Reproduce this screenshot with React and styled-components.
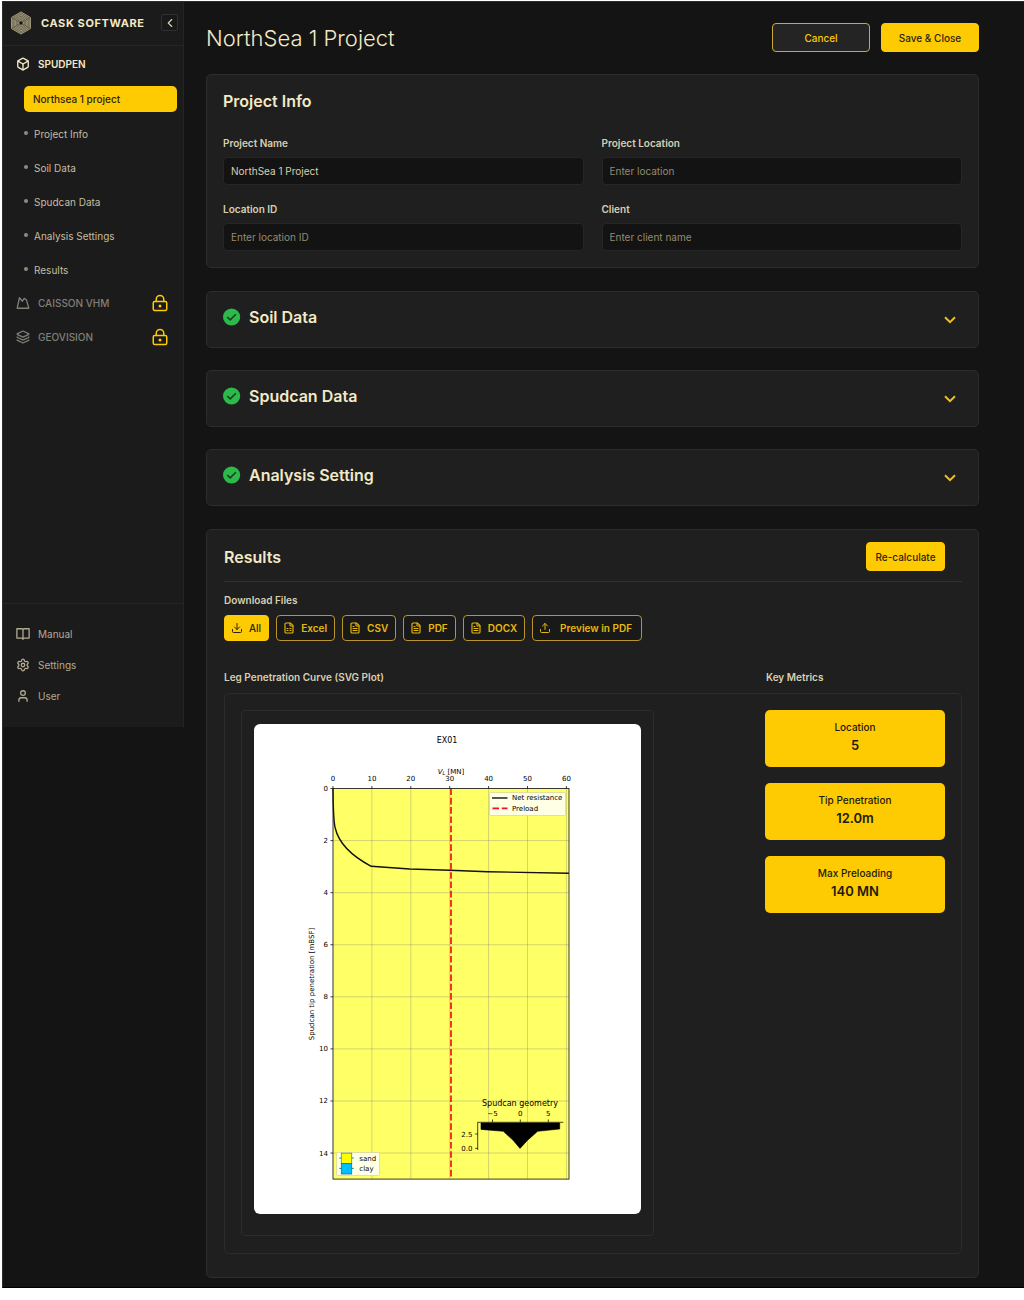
import React from 'react'
import styled, { createGlobalStyle } from 'styled-components'
import {
  Box, ChevronLeft, Download, FileSpreadsheet, FileText,
  Layers, LockKeyhole, Settings, Upload, User
} from 'lucide-react'

const yellow = '#fecb02'
const cream = '#f3e9c6'
const sand = '#d8cfb2'
const muted = '#b3ab90'
const line = '#2c2c2c'

const GlobalStyle = createGlobalStyle`
  * {
    box-sizing: border-box;
  }
  body {
    margin: 0;
    background: #fff;
    font-family: Inter, 'Liberation Sans', sans-serif;
    font-size: 10px;
    line-height: 14px;
    color: ${sand};
  }
  h1, h2, h3, p, ul {
    margin: 0;
    padding: 0;
  }
  button, input {
    font-family: inherit;
    font-size: 10px;
  }
  svg {
    display: block;
    flex-shrink: 0;
  }
`

const Page = styled.div`
  display: flex;
  align-items: flex-start;
  margin: 1px 0 0 2px;
  background: #141414;
  border: 1px solid #2a302c;
  border-right: 0;
  border-bottom-color: #000;
`

/* sidebar */

const Sidebar = styled.aside`
  display: flex;
  flex-direction: column;
  flex: 0 0 181px;
  background: #1b1b1b;
  border-right: 1px solid #252525;
`
const Brand = styled.div`
  display: flex;
  align-items: center;
  gap: 9px;
  height: 44px;
  padding: 0 5px 2px 7px;
  border-bottom: 1px solid #262626;
`
const BrandName = styled.span`
  flex: 1;
  color: ${cream};
  font-size: 11px;
  font-weight: 700;
  letter-spacing: 0.6px;
  white-space: nowrap;
`
const CollapseButton = styled.button`
  display: flex;
  align-items: center;
  justify-content: center;
  width: 17px;
  height: 17px;
  padding: 0;
  color: ${sand};
  background: #191919;
  border: 1px solid #303030;
  border-radius: 2px;
  cursor: pointer;
`
const Nav = styled.nav`
  min-height: 558px;
  padding: 1px 6px 0 13px;
  border-bottom: 1px solid #262626;
`
const NavLink = styled.a`
  display: flex;
  align-items: center;
  gap: 8px;
  height: 34px;
  padding-right: 8px;
  color: ${props => props.$locked ? '#827f78' : cream};
  font-weight: ${props => props.$locked ? 500 : 600};
  text-decoration: none;
  span {
    flex: 1;
  }
`
const ActiveLink = styled.a`
  display: block;
  margin: 5px 0 5px 8px;
  padding: 6px 9px;
  color: #2a2410;
  font-weight: 500;
  background: ${yellow};
  border-radius: 5px;
  text-decoration: none;
`
const SubLink = styled.a`
  display: flex;
  align-items: center;
  gap: 6px;
  height: 34px;
  padding-left: 8px;
  color: #c5bda0;
  text-decoration: none;
  &::before {
    content: '';
    width: 4px;
    height: 4px;
    margin-bottom: 2px;
    border-radius: 50%;
    background: #8f8b7d;
  }
`
const SubList = styled.div`
  margin-bottom: -1px;
`
const FootNav = styled.nav`
  padding: 14px 13px 16px;
`
const FootLink = styled.a`
  display: flex;
  align-items: center;
  gap: 8px;
  height: 31px;
  color: ${muted};
  text-decoration: none;
`

/* main column */

const Main = styled.main`
  flex: 1;
  min-width: 0;
  display: flex;
  flex-direction: column;
  gap: 23px;
  padding: 21px 45px 9px 22px;
`
const TopBar = styled.header`
  display: flex;
  align-items: center;
  gap: 11px;
  height: 29px;
  margin-bottom: -1px;
`
const PageTitle = styled.h1`
  flex: 1;
  color: ${cream};
  font-size: 22px;
  line-height: 28px;
  font-weight: 300;
`
const Button = styled.button`
  min-width: ${props => props.$wide ? '98px' : '79px'};
  height: 29px;
  padding: 0 8px;
  white-space: nowrap;
  color: ${props => props.$outline ? yellow : '#2a2410'};
  font-weight: 500;
  background: ${props => props.$outline ? '#242424' : yellow};
  border: 1px solid ${props => props.$outline ? '#c9a93c' : yellow};
  border-radius: 4px;
  cursor: pointer;
`
const Card = styled.section`
  padding: 16px;
  background: #1f1f1f;
  border: 1px solid ${line};
  border-radius: 5px;
`
const CardTitle = styled.h2`
  color: ${cream};
  font-size: 16px;
  line-height: 20px;
  font-weight: 600;
`
const FieldGrid = styled.div`
  display: grid;
  grid-template-columns: 1fr 1fr;
  gap: 17px 18px;
  margin-top: 25px;
`
const Field = styled.div`
  display: flex;
  flex-direction: column;
  gap: 7px;
`
const Label = styled.label`
  color: ${sand};
  font-weight: 600;
`
const Input = styled.input`
  width: 100%;
  height: 28px;
  padding: 0 7px;
  color: ${sand};
  background: #131313;
  border: 1px solid #262626;
  border-radius: 4px;
  outline: 0;
  &::placeholder {
    color: #938b70;
    opacity: 1;
  }
`
const Accordions = styled.div`
  display: flex;
  flex-direction: column;
  gap: 22px;
`
const AccordionCard = styled(Card)`
  display: flex;
  align-items: center;
  justify-content: space-between;
  height: 57px;
  padding: 0 17px 0 16px;
`
const AccordionTitle = styled.div`
  display: flex;
  align-items: center;
  gap: 8px;
  padding-bottom: 5px;
`
const ExpandButton = styled.button`
  display: flex;
  align-items: center;
  justify-content: center;
  width: 22px;
  height: 22px;
  padding: 0;
  background: none;
  border: 0;
  cursor: pointer;
`

/* results */

const ResultsCard = styled(Card)`
  padding: 12px 16px 23px 17px;
`
const ResultsHead = styled.div`
  display: flex;
  align-items: center;
  justify-content: space-between;
  padding: 0 17px 10px 0;
  margin-bottom: 11px;
  border-bottom: 1px solid #303030;
`
const SmallTitle = styled.h3`
  color: ${sand};
  font-size: 10px;
  line-height: 14px;
  font-weight: 600;
`
const Downloads = styled.div`
  display: flex;
  flex-wrap: wrap;
  gap: 7px;
  margin: 8px 0 29px;
`
const DownloadButton = styled.button`
  display: flex;
  align-items: center;
  gap: ${props => props.$spread ? '9px' : '6px'};
  height: 26px;
  padding: 0 ${props => props.$spread ? '9px' : '7px'} 0 6px;
  color: ${props => props.$filled ? '#2a2410' : '#e6b90c'};
  font-weight: ${props => props.$filled ? 500 : 600};
  background: ${props => props.$filled ? yellow : '#191919'};
  border: 1px solid ${props => props.$filled ? yellow : '#b8942a'};
  border-radius: 4px;
  cursor: pointer;
`
const PanelLabels = styled.div`
  display: grid;
  grid-template-columns: 1fr 196px;
  margin-bottom: 9px;
`
const Panel = styled.div`
  display: grid;
  grid-template-columns: minmax(0, 413px) 180px;
  justify-content: space-between;
  align-items: start;
  padding: 16px 16px 17px;
  border: 1px solid ${line};
  border-radius: 5px;
`
const PlotFrame = styled.div`
  padding: 13px 12px 21px;
  border: 1px solid ${line};
  border-radius: 4px;
`
const PlotSvg = styled.svg`
  width: 100%;
  background: #fff;
  border-radius: 6px;
  font-family: 'DejaVu Sans', sans-serif;
  font-size: 7px;
`
const Metrics = styled.div`
  display: flex;
  flex-direction: column;
  gap: 16px;
`
const Metric = styled.div`
  height: 57px;
  padding-top: 10px;
  color: #1d1a0c;
  text-align: center;
  background: ${yellow};
  border-radius: 5px;
`
const MetricName = styled.p`
  font-weight: 500;
`
const MetricValue = styled.p`
  margin-top: 1px;
  font-size: 13px;
  line-height: 20px;
  font-weight: 600;
`

const hexagon = r => [0, 1, 2, 3, 4, 5].map(i => {
  const a = Math.PI / 3 * i - Math.PI / 2
  return `${12 + r * Math.cos(a)},${12 + r * Math.sin(a)}`
}).join(' ')

const Logo = () => (
  <svg width="22" height="24" viewBox="1 0 22 24" fill="none">
    <polygon points={hexagon(11.5)} fill="#57523f" />
    {[11, 9.4, 7.8, 6.2, 4.6, 3].map(r => (
      <polygon key={r} points={hexagon(r)} stroke="#b0a78a" strokeWidth="0.8" />
    ))}
    <path d="M12 12L2.5 6.5M12 12l9.5-5.5M12 12l-9.5 5.5M12 12l9.5 5.5" stroke="#5a5543" strokeWidth="0.7" />
    <circle cx="12" cy="12" r="1.3" fill="#141414" />
  </svg>
)

const PeakIcon = () => (
  <svg width="14" height="14" viewBox="0 0 24 24" fill="none" stroke="currentColor" strokeWidth="2.2" strokeLinejoin="round">
    <path d="M2 21L6 3l5 6 3-5 4 3 4 14z" />
  </svg>
)

const BookIcon = () => (
  <svg width="14" height="14" viewBox="0 0 24 24" fill="none" stroke="currentColor" strokeWidth="2.2" strokeLinejoin="round">
    <path d="M1.5 3H10a2 2 0 0 1 2 2 2 2 0 0 1 2-2h8.5v16H14a2 2 0 0 0-2 2 2 2 0 0 0-2-2H1.5zM12 5v17" />
  </svg>
)

const CheckIcon = () => (
  <svg width="18" height="18" viewBox="0 0 18 18" fill="none">
    <circle cx="8.6" cy="9" r="8.6" fill="#2cba4b" />
    <path d="M4.2 9l3 2.9 5.7-5.6" stroke="#1b3b22" strokeWidth="1.5" />
  </svg>
)

const ChevronIcon = () => (
  <svg width="12" height="8" viewBox="0 0 12 8" fill="none">
    <path d="M1 1.2l5 4.9 5-4.9" stroke="#edc02b" strokeWidth="2" />
  </svg>
)

const px = v => 79 + v * 3.89
const py = v => 64.5 + v * 26.04

const Plot = () => (
  <PlotSvg viewBox="0 0 387 490" role="img" aria-label="Leg penetration curve">
    <rect x="79" y="64.5" width="236" height="390.6" fill="#ffff66" />
    {[10, 20, 30, 40, 50, 60].map(v => (
      <path key={v} d={`M${px(v)} 64.5V455`} stroke="#777" strokeOpacity="0.45" strokeWidth="0.7" />
    ))}
    {[2, 4, 6, 8, 10, 12, 14].map(v => (
      <path key={v} d={`M79 ${py(v)}H315`} stroke="#777" strokeOpacity="0.45" strokeWidth="0.7" />
    ))}
    <path d="M197 64.5V455" stroke="#f2121c" strokeWidth="1.7" strokeDasharray="6.6 2.7" />
    <path
      d="M79 64.5C79.2 80 79.2 97 81.2 104C84.7 119 96.7 131.5 117.2 142.3L155.7 145L195.7 146.3L233.7 147.7L315 149.3"
      fill="none" stroke="#111" strokeWidth="1.4"
    />
    <rect x="79" y="64.5" width="236" height="390.6" fill="none" stroke="#222" strokeWidth="0.9" />

    <text x="193" y="19" fontSize="8" textAnchor="middle">EX01</text>
    <text x="197" y="49.5" textAnchor="middle">
      <tspan fontStyle="italic">V</tspan><tspan fontStyle="italic" fontSize="5" dy="1">L</tspan><tspan dy="-1"> [MN]</tspan>
    </text>
    {[0, 10, 20, 30, 40, 50, 60].map(v => (
      <g key={v}>
        <path d={`M${px(v)} 64.5v-2.5`} stroke="#111" strokeWidth="0.8" />
        <text x={px(v)} y="57" textAnchor="middle">{v}</text>
      </g>
    ))}
    {[0, 2, 4, 6, 8, 10, 12, 14].map(v => (
      <g key={v}>
        <path d={`M79 ${py(v)}h-2.5`} stroke="#111" strokeWidth="0.8" />
        <text x="74" y={py(v) + 2.5} textAnchor="end">{v}</text>
      </g>
    ))}
    <text transform="translate(60 260) rotate(-90)" textAnchor="middle">Spudcan tip penetration [mBSF]</text>

    <g transform="translate(1 0)">
      <rect x="234.5" y="68.5" width="76" height="23" rx="1" fill="#ffffe6" stroke="#d4d49a" strokeWidth="0.7" />
      <path d="M237 74h15.5" stroke="#111" strokeWidth="1.4" />
      <path d="M237.5 84.4h15" stroke="#f2121c" strokeWidth="1.7" strokeDasharray="6.6 2.7" />
      <text x="257" y="76">Net resistance</text>
      <text x="257" y="86.5">Preload</text>

      <text x="265" y="382" fontSize="8" textAnchor="middle">Spudcan geometry</text>
      <path d="M308.3 398.3H222.7V426M237.5 398v-2.5M265.3 398v-2.5M293.3 398v-2.5M222.7 410h-2.5M222.7 424.3h-2.5" fill="none" stroke="#111" strokeWidth="0.8" />
      <text x="237.5" y="392" textAnchor="middle">−5</text>
      <text x="265.3" y="392" textAnchor="middle">0</text>
      <text x="293.3" y="392" textAnchor="middle">5</text>
      <text x="217.5" y="412.7" textAnchor="end">2.5</text>
      <text x="217.5" y="426.8" textAnchor="end">0.0</text>
      <polygon points="226,399 304.7,399 304.7,405 282.7,407.3 272.3,416.5 265,424.5 258.3,416.5 248.3,407.3 226,405.4" stroke="#000" strokeWidth="0.6" />

      <rect x="81.5" y="428.5" width="43" height="23" rx="1" fill="#ffffe6" stroke="#d4d49a" strokeWidth="0.7" />
      <path d="M84.3 434h14.4M84.3 444.4h14.4" stroke="#1a7f8e" strokeWidth="1" />
      <rect x="86.3" y="429.2" width="10.4" height="10.4" fill="#ff0" stroke="#3d9c75" strokeWidth="0.8" />
      <rect x="86.3" y="439.6" width="10.4" height="10.4" fill="#00bfff" stroke="#1a6f9e" strokeWidth="0.8" />
      <text x="104.3" y="436.5">sand</text>
      <text x="104.3" y="447">clay</text>
    </g>
  </PlotSvg>
)

const fields = [
  { id: 'name', label: 'Project Name', value: 'NorthSea 1 Project' },
  { id: 'location', label: 'Project Location', placeholder: 'Enter location' },
  { id: 'locationId', label: 'Location ID', placeholder: 'Enter location ID' },
  { id: 'client', label: 'Client', placeholder: 'Enter client name' },
]

const formats = [
  { name: 'Excel', Icon: FileSpreadsheet },
  { name: 'CSV', Icon: FileText },
  { name: 'PDF', Icon: FileText },
  { name: 'DOCX', Icon: FileText },
]

const metrics = [
  ['Location', '5'],
  ['Tip Penetration', '12.0m'],
  ['Max Preloading', '140 MN'],
]

const App = () => {
  return (
    <>
      <GlobalStyle />
      <Page>
        <Sidebar>
          <Brand>
            <Logo />
            <BrandName>CASK SOFTWARE</BrandName>
            <CollapseButton aria-label="Collapse sidebar"><ChevronLeft size={14} /></CollapseButton>
          </Brand>
          <Nav>
            <NavLink href="#spudpen"><Box size={14} strokeWidth={2.3} /><span>SPUDPEN</span></NavLink>
            <ActiveLink href="#project">Northsea 1 project</ActiveLink>
            <SubList>
              {['Project Info', 'Soil Data', 'Spudcan Data', 'Analysis Settings', 'Results'].map(item => (
                <SubLink key={item} href="#section">{item}</SubLink>
              ))}
            </SubList>
            <NavLink $locked href="#caisson">
              <PeakIcon /><span>CAISSON VHM</span><LockKeyhole size={18} color={yellow} />
            </NavLink>
            <NavLink $locked href="#geovision">
              <Layers size={14} strokeWidth={2.2} /><span>GEOVISION</span><LockKeyhole size={18} color={yellow} />
            </NavLink>
          </Nav>
          <FootNav>
            <FootLink href="#manual"><BookIcon />Manual</FootLink>
            <FootLink href="#settings"><Settings size={14} strokeWidth={2.2} />Settings</FootLink>
            <FootLink href="#user"><User size={14} strokeWidth={2.2} />User</FootLink>
          </FootNav>
        </Sidebar>

        <Main>
          <TopBar>
            <PageTitle>NorthSea 1 Project</PageTitle>
            <Button $wide $outline>Cancel</Button>
            <Button $wide>Save &amp; Close</Button>
          </TopBar>

          <Card>
            <CardTitle>Project Info</CardTitle>
            <FieldGrid>
              {fields.map(field => (
                <Field key={field.id}>
                  <Label htmlFor={field.id}>{field.label}</Label>
                  <Input id={field.id} defaultValue={field.value} placeholder={field.placeholder} />
                </Field>
              ))}
            </FieldGrid>
          </Card>

          <Accordions>
            {['Soil Data', 'Spudcan Data', 'Analysis Setting'].map(title => (
              <AccordionCard key={title}>
                <AccordionTitle>
                  <CheckIcon />
                  <CardTitle>{title}</CardTitle>
                </AccordionTitle>
                <ExpandButton aria-label={`Expand ${title}`}><ChevronIcon /></ExpandButton>
              </AccordionCard>
            ))}
          </Accordions>

          <ResultsCard>
            <ResultsHead>
              <CardTitle>Results</CardTitle>
              <Button>Re-calculate</Button>
            </ResultsHead>
            <SmallTitle>Download Files</SmallTitle>
            <Downloads>
              <DownloadButton $filled><Download size={12} />All</DownloadButton>
              {formats.map(({ name, Icon }) => (
                <DownloadButton key={name}><Icon size={12} strokeWidth={2.3} />{name}</DownloadButton>
              ))}
              <DownloadButton $spread><Upload size={12} />Preview in PDF</DownloadButton>
            </Downloads>
            <PanelLabels>
              <SmallTitle>Leg Penetration Curve (SVG Plot)</SmallTitle>
              <SmallTitle>Key Metrics</SmallTitle>
            </PanelLabels>
            <Panel>
              <PlotFrame><Plot /></PlotFrame>
              <Metrics>
                {metrics.map(([name, value]) => (
                  <Metric key={name}>
                    <MetricName>{name}</MetricName>
                    <MetricValue>{value}</MetricValue>
                  </Metric>
                ))}
              </Metrics>
            </Panel>
          </ResultsCard>
        </Main>
      </Page>
    </>
  )
}

export default App
